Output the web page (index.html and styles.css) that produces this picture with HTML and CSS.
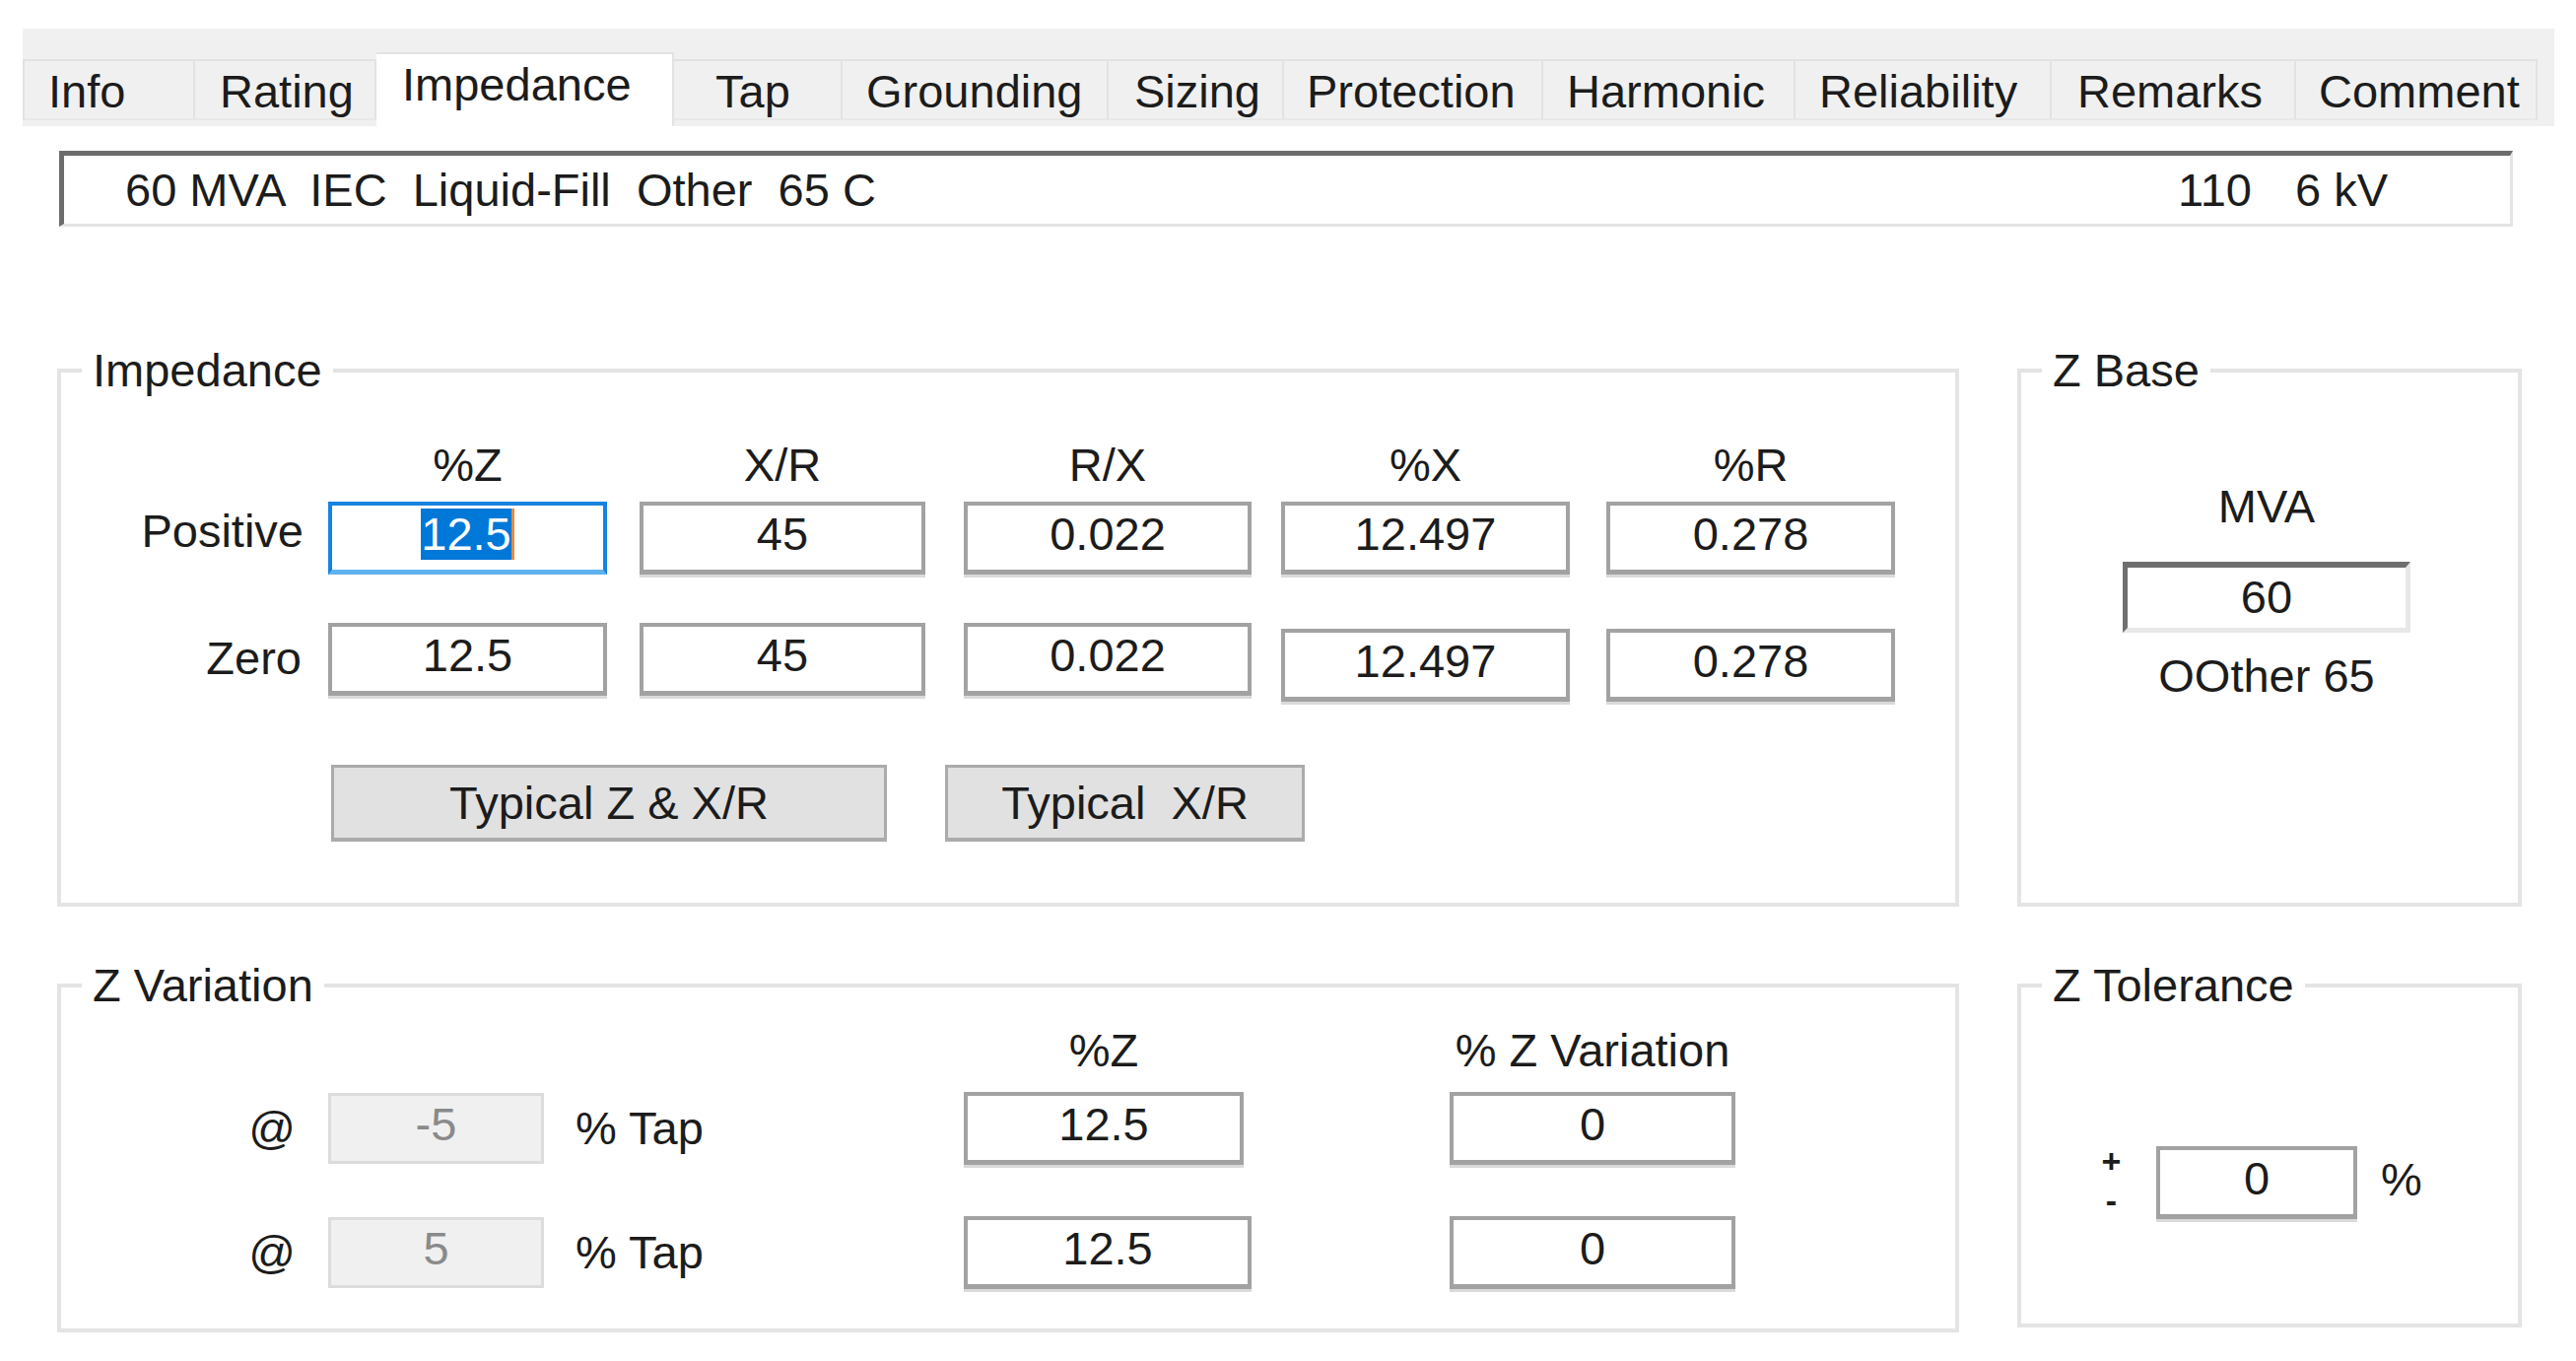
FILE: index.html
```html
<!DOCTYPE html>
<html>
<head>
<meta charset="utf-8">
<title>Impedance</title>
<link rel="stylesheet" href="styles.css">
</head>
<body>
<div class="tabs">
  <div class="tab t-info">Info</div>
  <div class="tab t-rating">Rating</div>
  <div class="tab t-imp active">Impedance</div>
  <div class="tab t-tap">Tap</div>
  <div class="tab t-gnd">Grounding</div>
  <div class="tab t-siz">Sizing</div>
  <div class="tab t-prot">Protection</div>
  <div class="tab t-harm">Harmonic</div>
  <div class="tab t-rel">Reliability</div>
  <div class="tab t-rem">Remarks</div>
  <div class="tab t-com">Comment</div>
</div>

<div class="infobox">
  <span class="pre">60 MVA  IEC  Liquid-Fill  Other  65 C</span>
  <span class="volts"><span>110</span><span>6 kV</span></span>
</div>

<div class="groups">
  <fieldset class="grp">
    <legend>Impedance</legend>
    <div class="imp-body">
      <div class="irow hdr">
        <span></span>
        <span class="h w283">%Z</span>
        <span class="h w290">X/R</span>
        <span class="h w292">R/X</span>
        <span class="h w293">%X</span>
        <span class="h w293">%R</span>
      </div>
      <div class="irow r1">
        <span class="lbl pos">Positive</span>
        <div class="tb focus w283"><span class="sel">12.5</span></div>
        <div class="tb w290">45</div>
        <div class="tb w292">0.022</div>
        <div class="tb w293">12.497</div>
        <div class="tb w293">0.278</div>
      </div>
      <div class="irow r2">
        <span class="lbl zero">Zero</span>
        <div class="tb w283">12.5</div>
        <div class="tb w290">45</div>
        <div class="tb w292">0.022</div>
        <div class="tb w293 shift">12.497</div>
        <div class="tb w293 shift">0.278</div>
      </div>
      <div class="btnrow">
        <div class="btn b1">Typical Z &amp; X/R</div>
        <div class="btn b2">Typical  X/R</div>
      </div>
    </div>
  </fieldset>

  <fieldset class="grp">
    <legend>Z Base</legend>
    <div class="zb-body">
      <span>MVA</span>
      <div class="tb sunk">60</div>
      <span class="other">OOther 65</span>
    </div>
  </fieldset>

  <fieldset class="grp">
    <legend>Z Variation</legend>
    <div class="zv-body">
      <div class="vrow hdr">
        <span></span><span></span><span></span>
        <span class="h w284">%Z</span>
        <span class="h w290">% Z Variation</span>
      </div>
      <div class="vrow r1">
        <span class="at">@</span>
        <div class="tb dis">-5</div>
        <span>% Tap</span>
        <div class="tb w284">12.5</div>
        <div class="tb w290">0</div>
      </div>
      <div class="vrow r2">
        <span class="at">@</span>
        <div class="tb dis">5</div>
        <span>% Tap</span>
        <div class="tb w292">12.5</div>
        <div class="tb w290">0</div>
      </div>
    </div>
  </fieldset>

  <fieldset class="grp tol">
    <legend>Z Tolerance</legend>
    <div class="zt-body">
      <div class="pm"><span class="plus">+</span><span class="minus">-</span></div>
      <div class="tb w204">0</div>
      <span class="pct">%</span>
    </div>
  </fieldset>
</div>
</body>
</html>
```

FILE: styles.css
```css
html, body {
  margin: 0;
  padding: 0;
  background: #ffffff;
}

body {
  font-family: "Liberation Sans", Arial, sans-serif;
  font-size: 47px;
  line-height: 54px;
  color: #1c1c1c;
}

/* ---------- tab strip ---------- */
.tabs {
  display: flex;
  align-items: flex-start;
  box-sizing: border-box;
  height: 99px;
  margin: 29px 22px 0 23px;
  padding-top: 31px;
  background: #f0f0f0;
}

.tab {
  box-sizing: border-box;
  height: 62px;
  padding: 4px 0 0 24px;
  border-top: 2px solid #e2e2e2;
  border-right: 2px solid #e2e2e2;
  border-bottom: 2px solid #e8e8e8;
  background: #f0f0f0;
  white-space: nowrap;
}

.tab:first-child {
  border-left: 2px solid #e2e2e2;
}

.tab.active {
  height: 75px;
  margin-top: -7px;
  padding-left: 26px;
  background: #ffffff;
  border-bottom: none;
}

.t-info { width: 175px; }
.t-rating { width: 184px; padding-left: 25px; }
.t-imp { width: 302px; }
.t-tap { width: 171px; padding-left: 42px; }
.t-gnd { width: 270px; }
.t-siz { width: 178px; padding-left: 26px; }
.t-prot { width: 263px; padding-left: 23px; }
.t-harm { width: 256px; }
.t-rel { width: 260px; }
.t-rem { width: 248px; padding-left: 26px; }
.t-com { width: 245px; padding-left: 23px; }

/* ---------- info box ---------- */
.infobox {
  box-sizing: border-box;
  display: flex;
  align-items: center;
  justify-content: space-between;
  width: 2490px;
  height: 77px;
  margin: 25px 0 0 60px;
  padding: 0 124px 0 62px;
  background: #ffffff;
  border-top: 5px solid #6c6c6c;
  border-left: 5px solid #6c6c6c;
  border-right: 3px solid #e4e4e4;
  border-bottom: 3px solid #e4e4e4;
}

.pre {
  white-space: pre;
}

.volts {
  display: flex;
  gap: 44px;
}

/* ---------- group boxes ---------- */
.groups {
  display: grid;
  grid-template-columns: 1930px 512px;
  grid-template-rows: 571px 379px;
  column-gap: 59px;
  row-gap: 53px;
  margin: 119px 0 0 58px;
}

.grp {
  box-sizing: border-box;
  margin: 0;
  padding: 0;
  min-width: 0;
  border: 4px solid #e4e4e4;
}

.grp legend {
  margin-left: 21px;
  padding: 0 11px;
  line-height: 54px;
}

.grp.tol {
  align-self: start;
  height: 374px;
}

/* ---------- text boxes ---------- */
.tb {
  box-sizing: border-box;
  display: flex;
  align-items: center;
  justify-content: center;
  height: 74px;
  padding-bottom: 8px;
  background: #ffffff;
  border: 4px solid #a2a2a2;
  border-bottom-width: 5px;
  box-shadow: 0 3px 0 #dadada;
  white-space: nowrap;
}

.tb.focus {
  border-color: #1683e0;
  border-bottom-color: #5fb2ee;
  box-shadow: none;
}

.sel {
  display: inline-block;
  line-height: 52px;
  background: #0078d7;
  color: #ffffff;
  border-right: 3px solid #e58a3a;
}

.tb.dis {
  width: 219px;
  height: 72px;
  background: #f0f0f0;
  border: 3px solid #dcdcdc;
  box-shadow: none;
  color: #8a8a8a;
}

.tb.sunk {
  width: 292px;
  height: 72px;
  margin-top: 29px;
  padding-bottom: 2px;
  border-top: 6px solid #6f6f6f;
  border-left: 5px solid #6f6f6f;
  border-right: 5px solid #e8e8e8;
  border-bottom: 5px solid #e8e8e8;
  box-shadow: none;
}

.w204 { width: 204px; }
.w283 { width: 283px; }
.w284 { width: 284px; }
.w290 { width: 290px; }
.w292 { width: 292px; }
.w293 { width: 293px; }

.h {
  text-align: center;
}

/* ---------- impedance group ---------- */
.imp-body {
  padding-top: 42px;
}

.irow {
  display: grid;
  grid-template-columns: 271px 316px 329px 322px 330px 293px;
  align-items: start;
}

.irow.r1 { margin-top: 10px; }
.irow.r2 { margin-top: 49px; }

.lbl {
  justify-self: end;
  padding-right: 25px;
}

.lbl.pos { margin-top: 3px; }
.lbl.zero { margin-top: 9px; padding-right: 27px; }

.shift { margin-top: 6px; }

.btnrow {
  display: flex;
  gap: 59px;
  margin: 64px 0 0 274px;
}

.btn {
  box-sizing: border-box;
  display: flex;
  align-items: center;
  justify-content: center;
  height: 78px;
  background: #e1e1e1;
  border: 3px solid #ababab;
  border-bottom-width: 4px;
  white-space: pre;
}

.btn.b1 { width: 564px; }
.btn.b2 { width: 365px; }

/* ---------- Z base ---------- */
.zb-body {
  display: flex;
  flex-direction: column;
  align-items: center;
  padding: 84px 6px 0 0;
}

.other {
  margin-top: 17px;
}

/* ---------- Z variation ---------- */
.zv-body {
  padding-top: 12px;
}

.vrow {
  display: grid;
  grid-template-columns: 271px 251px 394px 493px 290px;
  align-items: center;
}

.vrow.r1 { margin-top: 15px; }
.vrow.r2 { margin-top: 52px; }

.at {
  justify-self: end;
  padding-right: 33px;
}

/* ---------- Z tolerance ---------- */
.zt-body {
  display: flex;
  align-items: flex-start;
  padding: 136px 0 0 80px;
}

.pm {
  display: flex;
  flex-direction: column;
  align-items: center;
  width: 23px;
  margin-right: 34px;
  font-size: 34px;
  line-height: 30px;
}

.pm .plus {
  font-weight: bold;
}

.pm .minus {
  margin-top: 10px;
  font-weight: bold;
}

.pct {
  align-self: center;
  margin-left: 24px;
  padding-bottom: 6px;
}
```
